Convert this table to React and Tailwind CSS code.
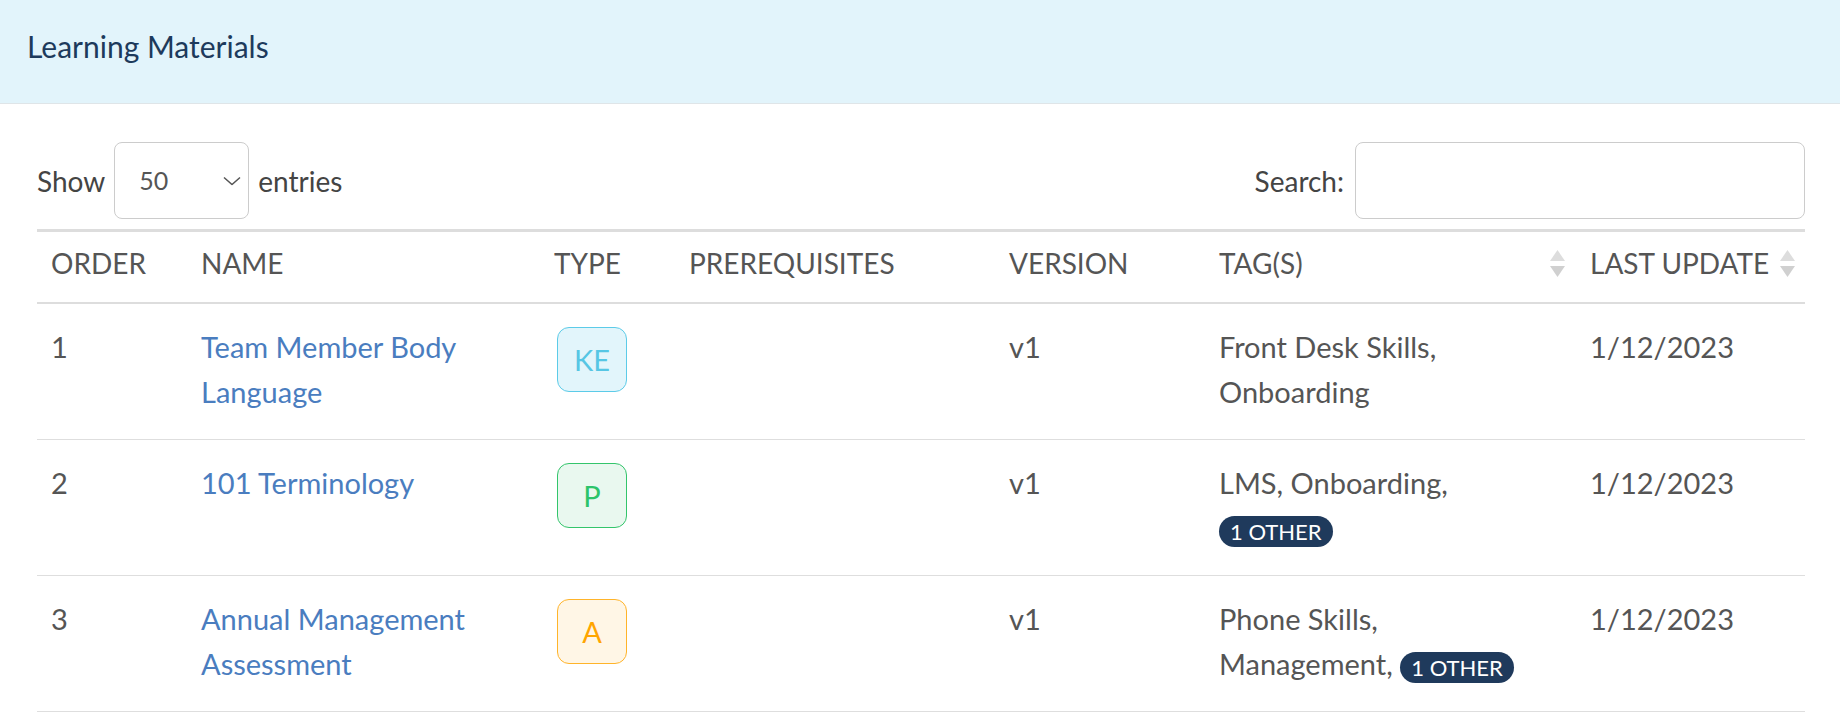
import React from "react";

const rows = [
  {
    order: 1,
    name: "Team Member Body Language",
    type: "KE",
    tags: "Front Desk Skills, Onboarding",
    others: 0,
    version: "v1",
    updated: "1/12/2023",
  },
  {
    order: 2,
    name: "101 Terminology",
    type: "P",
    tags: "LMS, Onboarding,",
    others: 1,
    version: "v1",
    updated: "1/12/2023",
  },
  {
    order: 3,
    name: "Annual Management Assessment",
    type: "A",
    tags: "Phone Skills, Management,",
    others: 1,
    version: "v1",
    updated: "1/12/2023",
  },
];

const typeStyles = {
  KE: "bg-[#e2f5fb] border-[#5ccbe8] text-[#56c6e4]",
  P: "bg-[#e9f8ef] border-[#33c56b] text-[#2cc46a]",
  A: "bg-[#fff6e6] border-[#ffb42a] text-[#ffa500]",
};

function SortIcon() {
  return (
    <svg width="15" height="27" viewBox="0 0 15 27" className="shrink-0">
      <path d="M7.5 0 L15 11 L0 11 Z" fill="#dddddd" />
      <path d="M0 16 L15 16 L7.5 27 Z" fill="#d0d0d0" />
    </svg>
  );
}

function App() {
  const th =
    "px-[14px] pt-[9px] pb-[16px] text-left font-normal uppercase text-[28px] leading-[45px] text-[#555] border-t-[3px] border-b-2 border-[#dddddd] align-top";
  const td =
    "px-[14px] pt-[20px] pb-[25px] text-[29px] leading-[45px] text-[#555] border-b border-[#dedede] align-top";

  return (
    <div className="min-h-[712px] bg-white font-['Lato',sans-serif]">
      {/* page title bar */}
      <div className="h-[104px] bg-[#e2f4fb] border-b border-[#dfe5e8] px-[27px] pt-[31px]">
        <h1 className="text-[30px] leading-none text-[#1d3a5c]">Learning Materials</h1>
      </div>

      <div className="pl-[37px] pr-[35px]">
        {/* table controls */}
        <div className="flex items-center justify-between mt-[38px] mb-[10px] text-[28px] text-[#444]">
          <div className="flex items-center">
            <span>Show</span>
            <div className="relative mx-[9px]">
              <select
                defaultValue="50"
                className="appearance-none w-[135px] h-[77px] border border-[#cccccc] rounded-[8px] pl-[24px] text-[25px] text-[#555] bg-white"
              >
                <option value="10">10</option>
                <option value="25">25</option>
                <option value="50">50</option>
                <option value="100">100</option>
              </select>
              <svg
                width="18"
                height="9"
                viewBox="0 0 18 9"
                className="absolute right-[8px] top-1/2 -translate-y-1/2 pointer-events-none"
              >
                <path d="M1 1 L9 8 L17 1" fill="none" stroke="#555" strokeWidth="1.5" />
              </svg>
            </div>
            <span>entries</span>
          </div>
          <label className="flex items-center">
            <span>Search:</span>
            <input
              type="text"
              className="ml-[11px] w-[450px] h-[77px] border border-[#cccccc] rounded-[8px] px-3 text-[26px]"
            />
          </label>
        </div>

        {/* table */}
        <table className="w-full table-fixed border-separate border-spacing-0">
          <colgroup>
            <col className="w-[150px]" />
            <col className="w-[353px]" />
            <col className="w-[135px]" />
            <col className="w-[320px]" />
            <col className="w-[210px]" />
            <col className="w-[371px]" />
            <col className="w-[229px]" />
          </colgroup>
          <thead>
            <tr>
              <th className={th}>Order</th>
              <th className={th}>Name</th>
              <th className={th}>Type</th>
              <th className={th}>Prerequisites</th>
              <th className={th}>Version</th>
              <th className={th + " pr-[11px]"}>
                <div className="flex items-center justify-between">
                  <span>Tag(s)</span>
                  <SortIcon />
                </div>
              </th>
              <th className={th + " pr-[10px]"}>
                <div className="flex items-center justify-between">
                  <span className="whitespace-nowrap">Last Update</span>
                  <SortIcon />
                </div>
              </th>
            </tr>
          </thead>
          <tbody>
            {rows.map((row) => (
              <tr key={row.order}>
                <td className={td}>{row.order}</td>
                <td className={td}>
                  <a href="#" className="text-[#4a7dbf]">
                    {row.name}
                  </a>
                </td>
                <td className={td}>
                  <div
                    className={
                      "flex items-center justify-center w-[70px] h-[65px] mt-[3px] ml-[3px] rounded-[12px] border text-[29px] leading-none " +
                      typeStyles[row.type]
                    }
                  >
                    {row.type}
                  </div>
                </td>
                <td className={td}></td>
                <td className={td}>{row.version}</td>
                <td className={td + " pr-[40px]"}>
                  {row.tags}
                  {row.others > 0 && (
                    <>
                      {" "}
                      <span className="inline-flex items-center h-[31px] px-[11px] rounded-full bg-[#1f3a5c] text-white text-[22px] leading-none align-middle">
                        {row.others} OTHER
                      </span>
                    </>
                  )}
                </td>
                <td className={td}>{row.updated}</td>
              </tr>
            ))}
          </tbody>
        </table>
      </div>
    </div>
  );
}

export default App;
